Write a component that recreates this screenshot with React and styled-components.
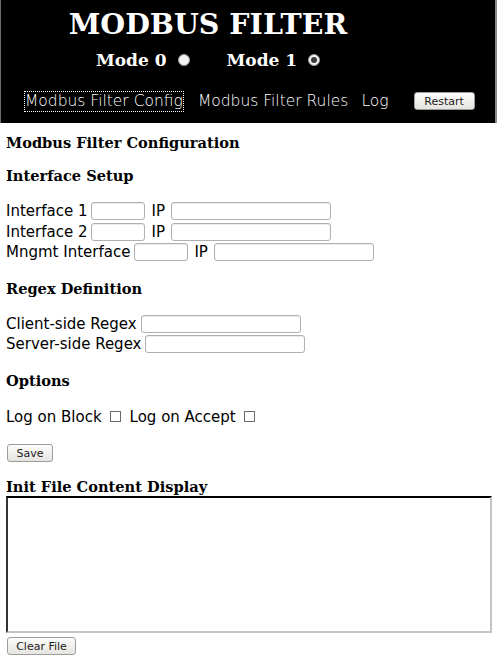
import React from "react";
import styled, { createGlobalStyle } from "styled-components";

const GlobalStyle = createGlobalStyle`
  html, body {
    margin: 0;
    padding: 0;
    background: #ffffff;
  }
  body {
    font-family: "DejaVu Sans", "Liberation Sans", sans-serif;
    color: #000;
  }
`;

const Header = styled.header`
  background: #000;
  color: #fff;
  height: 123px;
  box-sizing: border-box;
  padding-top: 5px;
  border-left: 1px solid #6e6e6e;
  border-right: 2px solid #8a8a8a;
`;

const Brand = styled.div`
  padding-right: 80px;
  text-align: center;
`;

const Title = styled.h1`
  margin: 0;
  font-family: "DejaVu Serif", "Liberation Serif", serif;
  font-weight: bold;
  font-size: 28.5px;
  line-height: 38px;
`;

const ModeRow = styled.div`
  margin-top: 6px;
  display: flex;
  justify-content: center;
  align-items: center;
  gap: 37px;
  height: 22px;
  font-family: "DejaVu Serif", "Liberation Serif", serif;
  font-weight: bold;
  font-size: 17px;
`;

const ModeItem = styled.label`
  display: flex;
  align-items: center;
  gap: 11px;
`;

const Radio = styled.input.attrs({ type: "radio" })`
  appearance: none;
  margin: 0;
  width: 12px;
  height: 12px;
  border-radius: 50%;
  background: #f2f2f2;
  border: 1px solid #9a9a9a;
  box-sizing: border-box;
  position: relative;
  &:checked::after {
    content: "";
    position: absolute;
    left: 2px;
    top: 2px;
    width: 6px;
    height: 6px;
    border-radius: 50%;
    background: #3a3a3a;
  }
`;

const Nav = styled.nav`
  margin-top: 20px;
  padding-left: 24px;
  display: flex;
  align-items: center;
  height: 20px;
  font-size: 15.5px;
  font-weight: 300;
`;

const NavLink = styled.a`
  color: #fff;
  text-decoration: none;
  margin-right: ${(p) => p.$gap || 14}px;
  outline: ${(p) => (p.$focused ? "1px dotted #fff" : "none")};
  outline-offset: 0;
  line-height: 19px;
`;

const Button = styled.button`
  font-family: "DejaVu Sans", "Liberation Sans", sans-serif;
  font-size: 11px;
  color: #1a1a1a;
  height: ${(p) => p.$h || 18}px;
  width: ${(p) => p.$w}px;
  padding: 0;
  border: 1px solid #9c9c9c;
  border-radius: 3px;
  background: linear-gradient(#fdfdfc, #e6e4df);
  cursor: pointer;
`;

const Main = styled.main`
  padding: 0 5px 0 6px;
`;

const Heading = styled.h3`
  margin: ${(p) => p.$top}px 0 ${(p) => p.$bottom || 0}px;
  font-family: "DejaVu Serif", "Liberation Serif", serif;
  font-weight: bold;
  font-size: 14.6px;
  line-height: 20px;
`;

const Fields = styled.div`
  margin-top: ${(p) => p.$top || 14}px;
`;

const Row = styled.div`
  display: flex;
  align-items: center;
  height: 20.5px;
  font-size: 15px;
  white-space: nowrap;
`;

const IpLabel = styled.span`
  display: inline-block;
  width: 16px;
`;

const Input = styled.input.attrs({ type: "text" })`
  box-sizing: border-box;
  width: ${(p) => p.$w}px;
  height: 18px;
  margin: 0 6px 0 4px;
  border: 1px solid #b0b0b0;
  border-radius: 3px;
  box-shadow: inset 0 1px 1px rgba(0, 0, 0, 0.08);
  padding: 0 3px;
  font-size: 13px;
`;

const Check = styled.input.attrs({ type: "checkbox" })`
  appearance: none;
  margin: 0 9px 0 8px;
  width: 11px;
  height: 11px;
  border: 1px solid #6a6a6a;
  background: #fff;
  box-sizing: border-box;
`;

const ButtonRow = styled.div`
  margin-top: ${(p) => p.$top}px;
  padding-left: 1px;
  display: flex;
`;

const FileBox = styled.textarea`
  display: block;
  box-sizing: border-box;
  width: 486px;
  height: 137px;
  margin: 0;
  resize: none;
  border-style: solid;
  border-width: 2px;
  border-color: #000 #c4c4c4 #c4c4c4 #333;
`;

export default function App() {
  return (
    <>
      <GlobalStyle />
      <Header>
        <Brand>
          <Title>MODBUS FILTER</Title>
          <ModeRow>
            <ModeItem>
              Mode 0 <Radio name="mode" />
            </ModeItem>
            <ModeItem>
              Mode 1 <Radio name="mode" defaultChecked />
            </ModeItem>
          </ModeRow>
        </Brand>
        <Nav>
          <NavLink href="#" $focused $gap={15}>
            Modbus Filter Config
          </NavLink>
          <NavLink href="#" $gap={13}>
            Modbus Filter Rules
          </NavLink>
          <NavLink href="#" $gap={25}>
            Log
          </NavLink>
          <Button $w={61}>Restart</Button>
        </Nav>
      </Header>
      <Main>
        <Heading $top={10}>Modbus Filter Configuration</Heading>
        <Heading $top={13}>Interface Setup</Heading>
        <Fields $top={15}>
          <Row>
            Interface 1 <Input $w={54} /> <IpLabel>IP</IpLabel>
            <Input $w={160} />
          </Row>
          <Row>
            Interface 2 <Input $w={54} /> <IpLabel>IP</IpLabel>
            <Input $w={160} />
          </Row>
          <Row>
            Mngmt Interface <Input $w={54} /> <IpLabel>IP</IpLabel>
            <Input $w={160} />
          </Row>
        </Fields>
        <Heading $top={16}>Regex Definition</Heading>
        <Fields $top={15}>
          <Row>
            Client-side Regex <Input $w={160} />
          </Row>
          <Row>
            Server-side Regex <Input $w={160} />
          </Row>
        </Fields>
        <Heading $top={16}>Options</Heading>
        <Fields $top={16}>
          <Row>
            Log on Block <Check /> Log on Accept <Check />
          </Row>
        </Fields>
        <ButtonRow $top={17}>
          <Button $w={46} $h={18}>Save</Button>
        </ButtonRow>
        <Heading $top={15} $bottom={-1}>
          Init File Content Display
        </Heading>
        <FileBox />
        <ButtonRow $top={4}>
          <Button $w={69} $h={18}>Clear File</Button>
        </ButtonRow>
      </Main>
    </>
  );
}
